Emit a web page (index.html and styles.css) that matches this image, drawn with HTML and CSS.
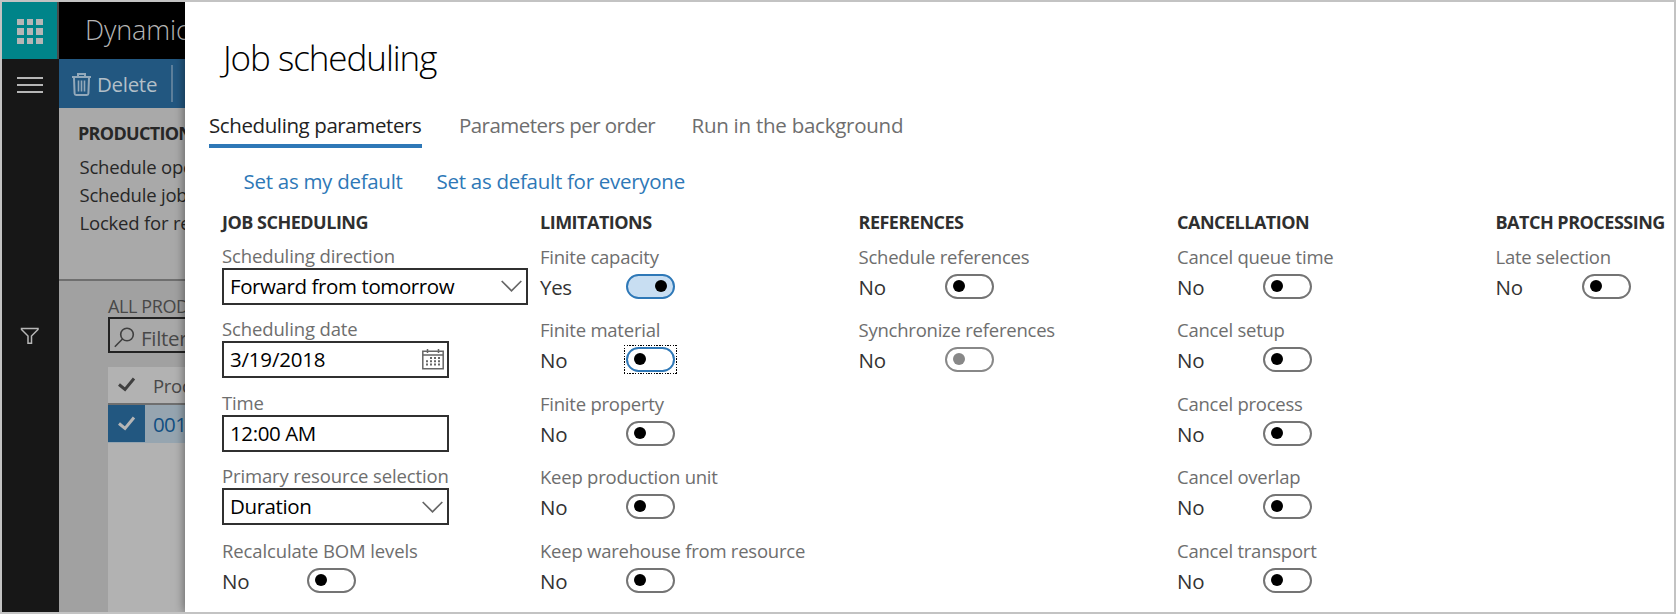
FILE: index.html
```html
<!DOCTYPE html>
<html lang="en">
<head>
<meta charset="utf-8">
<title>Job scheduling</title>
<link rel="stylesheet" href="styles.css">
</head>
<body>
<div class="frame">
  <nav class="rail">
    <div class="waffle">
      <svg width="26" height="25" viewBox="0 0 26 25" fill="#b6b6b6"><path d="M0 0h7v6H0zM10 0h6v6h-6zM19 0h7v6h-7zM0 9h7v7H0zM10 9h6v7h-6zM19 9h7v7h-7zM0 19h7v6H0zM10 19h6v6h-6zM19 19h7v6h-7z"/></svg>
    </div>
    <svg class="burger" width="26" height="16" viewBox="0 0 26 16" fill="#b6b6b6"><path d="M0 0h26v2H0zM0 7h26v2H0zM0 14h26v2H0z"/></svg>
    <svg class="funnel" width="20" height="18" viewBox="0 0 20 18" fill="none" stroke="#b6b6b6" stroke-width="1.5"><path d="M1.5 1.5h16.5v1L11.5 9v7.3h-3.500V9L1.500 2.500z"/></svg>
  </nav>
  <section class="backdrop">
    <header class="brand">Dynamics 365</header>
    <div class="actions">
      <svg width="19" height="23" viewBox="0 0 19 23" fill="none" stroke="#93a9ba"><path stroke-width="2" d="M0 4h19M6 4V1h7v3M2 5l.6 15.500q.1 1.500 1.500 1.500h10.800q1.400 0 1.500-1.500L17 5"/><path stroke-width="1.600" d="M6.500 7.500v11M9.500 7.500v11M12.500 7.500v11"/></svg>
      <span class="delete">Delete</span>
      <i class="divider"></i>
    </div>
    <div class="group">
      <h3>PRODUCTION ORDER</h3>
      <p>Schedule operations</p>
      <p>Schedule jobs</p>
      <p>Locked for rescheduling</p>
    </div>
    <div class="list">
      <div class="list-title">ALL PRODUCTION ORDERS</div>
      <div class="filter">
        <svg width="21" height="21" viewBox="0 0 21 21" fill="none" stroke="#3f3f3f" stroke-width="1.600"><circle cx="13" cy="7.500" r="6.300"/><path d="M8.500 12L.8 19.800"/></svg>
        <span>Filter</span>
      </div>
      <div class="grid">
        <div class="row head">
          <div class="check"><svg width="18" height="15" viewBox="0 0 18 15" fill="none" stroke="#3f3f3f" stroke-width="3"><path d="M1 7.500l6 5L16 1.500"/></svg></div>
          <div class="cell">Production</div>
        </div>
        <div class="row selected">
          <div class="check"><svg width="18" height="15" viewBox="0 0 18 15" fill="none" stroke="#b6b6b6" stroke-width="3"><path d="M1 7.500l6 5L16 1.500"/></svg></div>
          <div class="cell">001234</div>
        </div>
      </div>
    </div>
  </section>
  <main class="dialog">
    <h1>Job scheduling</h1>
    <div class="tabs">
      <span class="tab active">Scheduling parameters</span>
      <span class="tab per-order">Parameters per order</span>
      <span class="tab">Run in the background</span>
    </div>
    <div class="links"><a>Set as my default</a><a>Set as default for everyone</a></div>
    <div class="columns">
      <section class="job">
        <h2>JOB SCHEDULING</h2>
        <div class="field input"><label>Scheduling direction</label><div class="box wide">Forward from tomorrow<svg width="21" height="12" viewBox="0 0 21 12" fill="none" stroke="#666" stroke-width="1.700"><path d="M.7 1l9.800 9.800L20.300 1"/></svg></div></div>
        <div class="field input"><label>Scheduling date</label><div class="box date">3/19/2018<svg class="calendar" width="22" height="21" viewBox="0 0 22 21"><path fill="none" stroke="#666" stroke-width="1.500" d="M.8 2.300h20.400v17.500H.8zM.8 6h20.400M5.500 0v4M16.500 0v4"/><path stroke="#666" stroke-width="2" stroke-dasharray="2 2" d="M8 9h11M4 12.300h15M4 15.600h15"/></svg></div></div>
        <div class="field input"><label>Time</label><div class="box">12:00 AM</div></div>
        <div class="field input"><label>Primary resource selection</label><div class="box">Duration<svg width="21" height="12" viewBox="0 0 21 12" fill="none" stroke="#666" stroke-width="1.700"><path d="M.7 1l9.800 9.800L20.300 1"/></svg></div></div>
        <div class="field"><label>Recalculate BOM levels</label><div class="value"><span>No</span><i class="toggle"></i></div></div>
      </section>
      <section>
        <h2>LIMITATIONS</h2>
        <div class="field"><label>Finite capacity</label><div class="value"><span>Yes</span><i class="toggle on"></i></div></div>
        <div class="field"><label>Finite material</label><div class="value"><span>No</span><i class="toggle focused"></i></div></div>
        <div class="field"><label>Finite property</label><div class="value"><span>No</span><i class="toggle"></i></div></div>
        <div class="field"><label>Keep production unit</label><div class="value"><span>No</span><i class="toggle"></i></div></div>
        <div class="field"><label>Keep warehouse from resource</label><div class="value"><span>No</span><i class="toggle"></i></div></div>
      </section>
      <section>
        <h2>REFERENCES</h2>
        <div class="field"><label>Schedule references</label><div class="value"><span>No</span><i class="toggle"></i></div></div>
        <div class="field"><label>Synchronize references</label><div class="value"><span>No</span><i class="toggle disabled"></i></div></div>
      </section>
      <section>
        <h2>CANCELLATION</h2>
        <div class="field"><label>Cancel queue time</label><div class="value"><span>No</span><i class="toggle"></i></div></div>
        <div class="field"><label>Cancel setup</label><div class="value"><span>No</span><i class="toggle"></i></div></div>
        <div class="field"><label>Cancel process</label><div class="value"><span>No</span><i class="toggle"></i></div></div>
        <div class="field"><label>Cancel overlap</label><div class="value"><span>No</span><i class="toggle"></i></div></div>
        <div class="field"><label>Cancel transport</label><div class="value"><span>No</span><i class="toggle"></i></div></div>
      </section>
      <section>
        <h2>BATCH PROCESSING</h2>
        <div class="field"><label>Late selection</label><div class="value"><span>No</span><i class="toggle"></i></div></div>
      </section>
    </div>
  </main>
</div>
</body>
</html>
```
FILE: styles.css
```css
* { box-sizing: border-box; }
body { margin: 0; font-family: "Open Sans", "Noto Sans", sans-serif; }
h1, h2, h3, p { margin: 0; }
svg { display: block; flex: none; }

.frame { display: flex; width: 1676px; height: 614px; border: 2px solid #c3c3c3; overflow: hidden; background: #fff; }

.rail { width: 57px; flex: none; background: #171717; }
.waffle { width: 57px; height: 57px; padding: 17px 0 0 15px; background: #008489; border-right: 2px solid #4a4a4a; }
.burger { margin: 18px 0 0 15px; }
.funnel { margin: 234px 0 0 18px; }

.backdrop { width: 126px; flex: none; overflow: hidden; background: #a1a1a1; white-space: nowrap; display: flex; flex-direction: column; }
.brand { height: 57px; flex: none; padding-left: 26px; background: #000; color: #b6b6b6; font-size: 27px; font-weight: 300; line-height: 56px; letter-spacing: -0.1px; }
.actions { height: 49px; flex: none; display: flex; padding: 14px 0 0 13px; background: #225780; color: #b3bfc8; }
.delete { margin: -3px 0 0 6px; font-size: 20.5px; line-height: 28px; letter-spacing: -0.3px; }
.divider { flex: none; width: 2px; height: 37px; margin: -8px 0 0 14px; background: #5d7f9b; }
.group { height: 173px; flex: none; padding: 10px 0 0 19px; background: #a9a9a9; border-bottom: 2px solid #6f6f6f; color: #272727; }
.group h3 { font-size: 18px; line-height: 30px; letter-spacing: -0.7px; margin-bottom: 5px; }
.group p { padding-left: 1.5px; font-size: 18.5px; line-height: 28px; letter-spacing: -0.2px; }
.list { flex: 1; padding: 11px 0 0 49px; display: flex; flex-direction: column; }
.list-title { height: 25px; font-size: 18px; line-height: 28px; letter-spacing: -0.4px; color: #484848; }
.filter { height: 36px; width: 300px; display: flex; gap: 6px; padding: 8px 0 0 4px; border: 2px solid #222; background: #a9a9a9; font-size: 20.5px; line-height: 22px; color: #484848; letter-spacing: -0.3px; }
.grid { flex: 1; margin-top: 14px; background: #b2b2b2; }
.row { display: flex; width: 300px; }
.check { width: 37px; flex: none; padding: 10px 0 0 10px; }
.cell { flex: 1; padding-left: 8px; }
.head { height: 38px; border-bottom: 2px solid #6f6f6f; font-size: 18.5px; line-height: 38px; letter-spacing: -0.3px; color: #484848; }
.selected { height: 38px; background: #96a5b0; font-size: 20.5px; line-height: 38px; letter-spacing: -0.6px; color: #124f82; }
.selected .check { height: 37px; padding-top: 11px; background: #225780; }

.dialog { flex: 1; min-width: 0; position: relative; background: #fff; box-shadow: 0 0 10px rgba(0, 0, 0, 0.5); padding: 31px 0 0 24px; white-space: nowrap; }
.dialog h1 { padding-left: 14px; font-size: 35px; font-weight: 300; line-height: 50px; letter-spacing: -1.05px; color: #000; }
.tabs { display: flex; gap: 37px; height: 38px; margin-top: 27px; font-size: 20.5px; line-height: 30px; letter-spacing: -0.25px; color: #6e6e6e; }
.active { height: 38px; width: 213px; border-bottom: 4px solid #2e78b7; letter-spacing: -0.4px; color: #222; }
.per-order { width: 195.5px; letter-spacing: -0.55px; }
.links { display: flex; gap: 34px; margin: 18px 0 0 34.5px; font-size: 20.5px; line-height: 30px; letter-spacing: -0.28px; color: #2e78b7; }
.columns { display: grid; grid-template-columns: repeat(5, 318.5px); margin: 12px 0 0 13px; }
.columns h2 { font-size: 18px; line-height: 28px; letter-spacing: -0.5px; margin-bottom: 8.9px; color: #2f2f2f; }
.columns section + section { margin-left: -0.5px; }
.field { height: 73.45px; }
.field label { display: block; height: 24px; font-size: 18.5px; line-height: 24px; letter-spacing: -0.23px; color: #6e6e6e; }
.job label { letter-spacing: -0.13px; }
.input label { line-height: 22px; margin-bottom: -1px; }
.box { display: flex; justify-content: space-between; align-items: center; width: 227px; height: 37px; padding: 0 4px 0 6px; border: 2px solid #303030; font-size: 20.5px; letter-spacing: -0.4px; line-height: 33px; color: #000; }
.date { padding-right: 3px; letter-spacing: -0.2px; }
.wide { width: 306px; }
.value { display: flex; padding-top: 3px; font-size: 20.5px; line-height: 30px; color: #333; }
.value span { width: 86.2px; letter-spacing: -0.3px; }
.job .value span { width: 85px; }
.toggle { width: 49px; height: 25px; margin-top: 2px; padding: 4px 6px; border: 2px solid #747474; border-radius: 13px; display: flex; }
.toggle::before { content: ""; width: 12px; height: 12px; border-radius: 50%; background: #000; }
.on { justify-content: flex-end; border-color: #2e78b7; background: #c8def2; }
.focused { position: relative; border-color: #2e78b7; }
.focused::after {
  --across: repeating-linear-gradient(90deg, #000 0 1.4px, transparent 1.4px 2.7px);
  --down: repeating-linear-gradient(#000 0 1.4px, transparent 1.4px 2.7px);
  content: "";
  position: absolute;
  inset: -4px;
  background: var(--across) top / 100% 1.4px no-repeat, var(--across) bottom / 100% 1.4px no-repeat, var(--down) left / 1.4px 100% no-repeat, var(--down) right / 1.4px 100% no-repeat;
}
.disabled { border-color: #888; }
.disabled::before { background: #888; }
```
